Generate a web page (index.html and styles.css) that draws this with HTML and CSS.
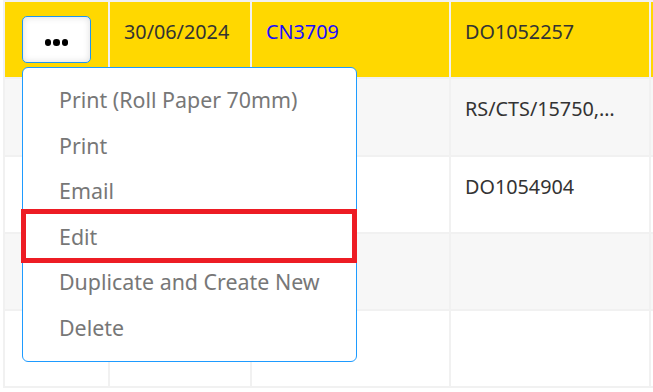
FILE: index.html
```html
<!DOCTYPE html>
<html>
<head>
<meta charset="utf-8">
<link rel="stylesheet" href="styles.css">
</head>
<body>
<div class="frame">
<table class="grid">
  <colgroup>
    <col class="c1"><col class="c2"><col class="c3"><col class="c4"><col class="c5">
  </colgroup>
  <tr class="row hl">
    <td class="cell action">
      <div class="actions">
        <button class="more"><span class="dot"></span><span class="dot"></span><span class="dot"></span></button>
        <div class="menu">
          <div class="item">Print (Roll Paper 70mm)</div>
          <div class="item">Print</div>
          <div class="item">Email</div>
          <div class="item">Edit</div>
          <div class="item">Duplicate and Create New</div>
          <div class="item">Delete</div>
          <div class="mark"></div>
        </div>
      </div>
    </td>
    <td class="cell">30/06/2024</td>
    <td class="cell"><a class="link">CN3709</a></td>
    <td class="cell">DO1052257</td>
    <td class="cell"></td>
  </tr>
  <tr class="row alt">
    <td class="cell"></td><td class="cell"></td><td class="cell"></td>
    <td class="cell trunc">RS/CTS/15750,…</td><td class="cell"></td>
  </tr>
  <tr class="row">
    <td class="cell"></td><td class="cell"></td><td class="cell"></td>
    <td class="cell">DO1054904</td><td class="cell"></td>
  </tr>
  <tr class="row alt">
    <td class="cell"></td><td class="cell"></td><td class="cell"></td><td class="cell"></td><td class="cell"></td>
  </tr>
  <tr class="row">
    <td class="cell"></td><td class="cell"></td><td class="cell"></td><td class="cell"></td><td class="cell"></td>
  </tr>
</table>
</div>
</body>
</html>
```
FILE: styles.css
```css
html, body {
  margin: 0;
  padding: 0;
  background: #ffffff;
  font-family: "Noto Sans", "Lato", sans-serif;
}
.frame {
  width: 653px;
  height: 392px;
  overflow: hidden;
  background: #ffffff;
}
.grid {
  border-collapse: separate;
  border-spacing: 2px;
  background: #f1f1f1;
  margin: 0 0 0 3px;
  table-layout: fixed;
  width: 700px;
}
.c1 { width: 103px; }
.c2 { width: 140px; }
.c3 { width: 197px; }
.c4 { width: 198px; }
.c5 { width: 50px; }
.row { height: 75.3px; background: #ffffff; }
.row.alt { background: #f7f7f7; }
.row.hl { background: #ffd800; }
.cell {
  vertical-align: top;
  padding: 17px 14px 0 14px;
  font-size: 19.8px;
  line-height: 26px;
  color: #333333;
  white-space: nowrap;
}
.cell.action { padding: 14px 0 0 17px; }
.link { color: #1a0dff; }
.actions { position: relative; }
.more {
  display: flex;
  align-items: center;
  justify-content: center;
  gap: 2px;
  width: 69px;
  height: 47px;
  padding: 0;
  background: #ffffff;
  border: 1px solid #1e96f0;
  border-radius: 5px;
  box-shadow: inset 0 0 7px rgba(0, 0, 0, 0.14);
}
.dot {
  width: 6.5px;
  height: 6.5px;
  border-radius: 50%;
  background: #000000;
  margin-top: 6px;
}
.menu {
  position: absolute;
  left: 0;
  top: 51px;
  width: 335px;
  box-sizing: border-box;
  background: #ffffff;
  border: 1px solid #1e9bff;
  border-radius: 6px;
  padding: 9px 0 11px;
  z-index: 2;
}
.item {
  height: 45.5px;
  line-height: 45.5px;
  padding-left: 36px;
  font-size: 21.4px;
  color: #777777;
  white-space: nowrap;
}
.mark {
  position: absolute;
  left: -2px;
  top: 141px;
  width: 336px;
  height: 54px;
  box-sizing: border-box;
  border: 5px solid #ed1c24;
}
```
